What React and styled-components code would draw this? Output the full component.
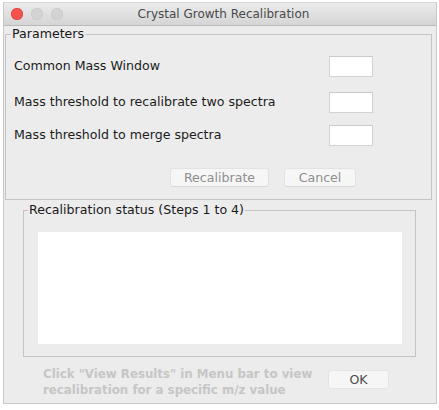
import React from "react";
import styled, { createGlobalStyle } from "styled-components";

const GlobalStyle = createGlobalStyle`
  html, body {
    margin: 0;
    padding: 0;
    background: #ffffff;
  }
  body {
    font-family: "DejaVu Sans", "Liberation Sans", sans-serif;
  }
`;

const Window = styled.div`
  box-sizing: border-box;
  margin: 2px 0 0 3px;
  width: 434px;
  height: 402px;
  border: 1px solid #c9c9c9;
  border-top-color: #d6d6d6;
  background: #ececec;
  display: flex;
  flex-direction: column;
`;

const TitleBar = styled.div`
  box-sizing: border-box;
  height: 23px;
  display: grid;
  grid-template-columns: 1fr auto 1fr;
  align-items: center;
  background: linear-gradient(#ebebeb, #d5d5d5);
  border-bottom: 1px solid #b9b9b9;
  padding: 0 0 1px 7px;
`;

const Lights = styled.div`
  display: flex;
  gap: 8px;
  align-items: center;
`;

const Light = styled.span`
  width: 12px;
  height: 12px;
  border-radius: 50%;
  background: ${(p) => p.$color};
  box-shadow: inset 0 0 0 0.5px ${(p) => p.$ring};
`;

const Title = styled.div`
  font-size: 12px;
  color: #4a4a4a;
  white-space: nowrap;
`;

const Group = styled.fieldset`
  margin: ${(p) => p.$margin};
  padding: 0;
  border: 1px solid #c4c4c4;
  border-radius: 0;
  min-width: 0;
`;

const Legend = styled.legend`
  font-size: 12.6px;
  line-height: 16px;
  color: #1a1a1a;
  padding: 0 1px;
  margin-left: ${(p) => p.$offset}px;
`;

const GroupInner = styled.div`
  display: flex;
  flex-direction: column;
  padding: ${(p) => p.$pad};
`;

const Row = styled.div`
  display: flex;
  align-items: center;
  justify-content: space-between;
  margin-top: ${(p) => p.$top}px;
  height: 21px;
`;

const Label = styled.span`
  font-size: 12.6px;
  color: #1c1c1c;
  white-space: nowrap;
  margin-top: -2px;
`;

const Field = styled.div`
  box-sizing: border-box;
  width: 44px;
  height: 21px;
  background: #ffffff;
  border: 1px solid #d3d3d3;
  border-top-color: #cacaca;
`;

const ButtonRow = styled.div`
  display: flex;
  gap: 15px;
  justify-content: flex-end;
  margin: 22px 17px 0 0;
`;

const Button = styled.div`
  box-sizing: border-box;
  width: ${(p) => p.$w}px;
  height: 19px;
  display: flex;
  align-items: center;
  justify-content: center;
  background: #f6f6f6;
  border: 1px solid #e2e2e2;
  border-bottom-color: #d8d8d8;
  border-radius: 3px;
  font-size: 12.6px;
  color: ${(p) => (p.$active ? "#4d4d4d" : "#8f8f8f")};
`;

const StatusArea = styled.div`
  height: 112px;
  background: #ffffff;
`;

const Footer = styled.div`
  display: flex;
  align-items: flex-start;
  padding: 9px 0 0 39px;
  gap: 10px;
`;

const Hint = styled.div`
  width: 275px;
  font-size: 11.8px;
  font-weight: bold;
  line-height: 16px;
  color: #c6c6c6;
  white-space: nowrap;
`;

const OkButton = styled(Button)`
  margin-top: 4px;
  border-color: #e4e4e4;
`;

export default function App() {
  return (
    <>
      <GlobalStyle />
      <Window>
        <TitleBar>
          <Lights>
            <Light $color="#f3524f" $ring="#de3c39" />
            <Light $color="#d3d3d3" $ring="#c6c6c6" />
            <Light $color="#d3d3d3" $ring="#c6c6c6" />
          </Lights>
          <Title>Crystal Growth Recalibration</Title>
          <span />
        </TitleBar>
        <Group $margin="0 4px 0 1px">
          <Legend $offset={5}>Parameters</Legend>
          <GroupInner $pad="0 58px 12px 8px">
            <Row $top={14}>
              <Label>Common Mass Window</Label>
              <Field />
            </Row>
            <Row $top={15}>
              <Label>Mass threshold to recalibrate two spectra</Label>
              <Field />
            </Row>
            <Row $top={12}>
              <Label>Mass threshold to merge spectra</Label>
              <Field />
            </Row>
            <ButtonRow>
              <Button $w={99}>Recalibrate</Button>
              <Button $w={72}>Cancel</Button>
            </ButtonRow>
          </GroupInner>
        </Group>
        <Group $margin="2px 20px 0 19px">
          <Legend $offset={4}>Recalibration status (Steps 1 to 4)</Legend>
          <GroupInner $pad="14px 13px 12px 14px">
            <StatusArea />
          </GroupInner>
        </Group>
        <Footer>
          <Hint>
            Click "View Results" in Menu bar to view
            <br />
            recalibration for a specific m/z value
          </Hint>
          <OkButton $w={61} $active>
            OK
          </OkButton>
        </Footer>
      </Window>
    </>
  );
}
